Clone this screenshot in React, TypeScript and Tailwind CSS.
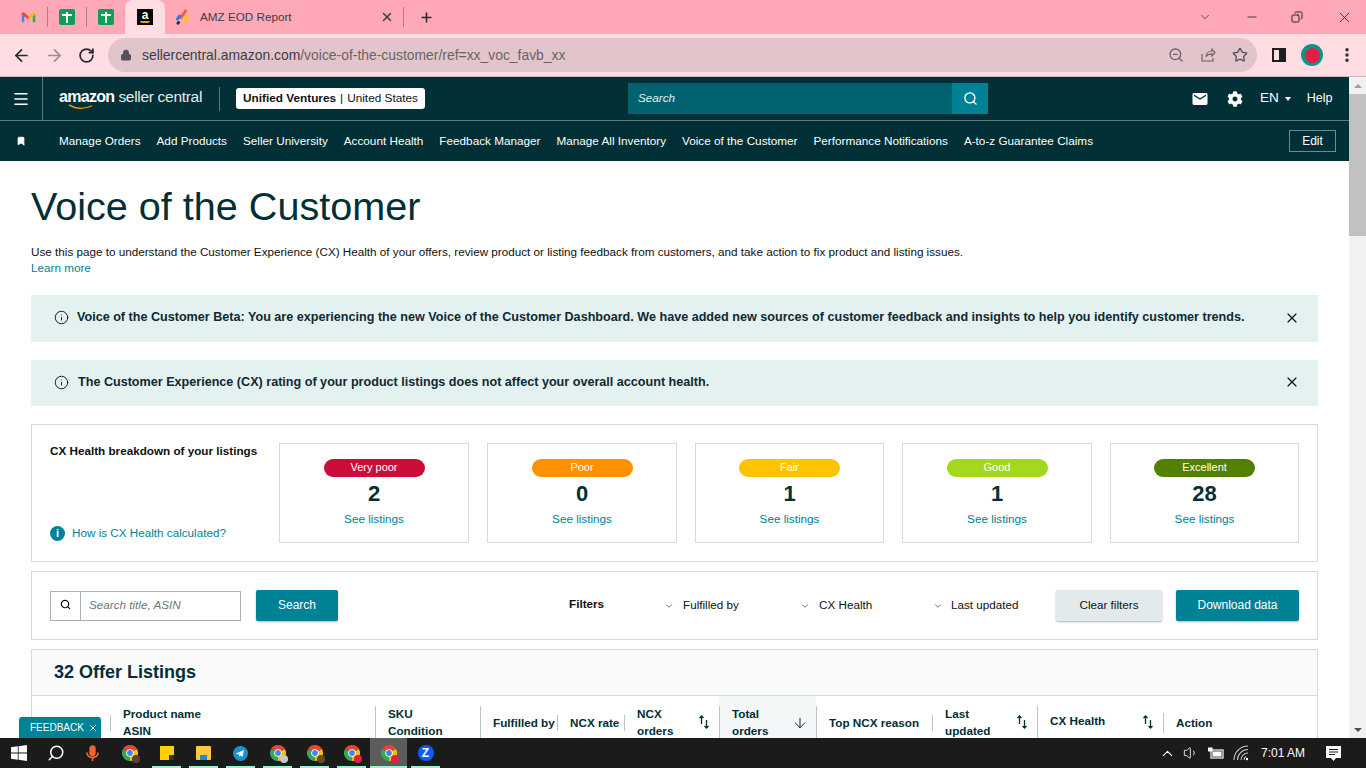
import { ArrowDown, ArrowLeft, ArrowRight, ChevronDown, ChevronUp, Info, Lock, Menu, Minus, MoreVertical, Plus, RotateCw, Search, Star, Volume1, X, ZoomOut, Bookmark, Copy } from "lucide-react";
import { FaCog } from "react-icons/fa";
import { MdEmail } from "react-icons/md";

const navItems = [
	"Manage Orders",
	"Add Products",
	"Seller University",
	"Account Health",
	"Feedback Manager",
	"Manage All Inventory",
	"Voice of the Customer",
	"Performance Notifications",
	"A-to-z Guarantee Claims",
];

const healthCards = [
	{ label: "Very poor", count: "2", color: "bg-[#cc0c39]", width: "w-[190px]" },
	{ label: "Poor", count: "0", color: "bg-[#ff9000]", width: "w-[190px]" },
	{ label: "Fair", count: "1", color: "bg-[#ffc400]", width: "w-[189px]" },
	{ label: "Good", count: "1", color: "bg-[#a4d81c]", width: "w-[190px]" },
	{ label: "Excellent", count: "28", color: "bg-[#538000]", width: "w-[189px]" },
];

function SheetsIcon() {
	return (
		<span className="relative flex h-4 w-4 items-center justify-center rounded-[2px] bg-[#0f9d58]">
			<span className="absolute h-[11px] w-[2px] bg-white" />
			<span className="absolute top-[5px] h-[2px] w-[10px] bg-white" />
		</span>
	);
}

function GmailIcon() {
	return (
		<svg viewBox="0 0 16 13" className="h-[11px] w-[15px]">
			<path d="M0 2v10h3V5z" fill="#4285f4" />
			<path d="M13 5v7h3V2z" fill="#34a853" />
			<path d="M0 2l3 3 5 4V5L3 1C1.500 0 0 .8 0 2z" fill="#ea4335" />
			<path d="M8 5l5-4c1.500-1 3-.2 3 1l-3 3-5 4z" fill="#fbbc04" />
		</svg>
	);
}

function ChromeIcon({ badge }: { badge?: string }) {
	return (
		<span className="relative block h-4 w-4">
			<svg viewBox="0 0 16 16" className="h-4 w-4">
				<path d="M8 8L1.070 4A8 8 0 0 1 14.930 4Z" fill="#ea4335" />
				<path d="M8 8L14.930 4A8 8 0 0 1 8 16Z" fill="#fbbc04" />
				<path d="M8 8L8 16A8 8 0 0 1 1.070 4Z" fill="#34a853" />
				<circle cx="8" cy="8" r="3.800" fill="white" />
				<circle cx="8" cy="8" r="2.900" fill="#4285f4" />
			</svg>
			{badge && <span className={`absolute -right-[2px] -bottom-[2px] h-2 w-2 rounded-full ${badge}`} />}
		</span>
	);
}

function SortIcon() {
	return (
		<svg viewBox="0 0 12 14" className="h-[14px] w-[12px] text-[#002f36]" fill="none" stroke="currentColor" strokeWidth="1.300">
			<path d="M3.500 9V1M1.500 3l2-2 2 2" />
			<path d="M8.500 5v8M6.500 11l2 2 2-2" />
		</svg>
	);
}

function TallDivider() {
	return <span className="absolute top-[10px] left-0 h-[50px] w-px bg-[#b8c6c9]" />;
}

function ShortDivider() {
	return <span className="absolute top-[19px] left-0 h-[16px] w-px bg-[#b8c6c9]" />;
}

function HeaderCell({ lines, sort, className, sortClass }: { lines: string[]; sort?: boolean; className?: string; sortClass?: string }) {
	return (
		<div className={`flex items-start justify-between pr-[9px] pl-[13px] ${className ?? "pt-[9px]"}`}>
			<div className="text-[11.700px] leading-[17px] font-semibold whitespace-nowrap text-[#002f36]">
				{lines.map((line) => (
					<div key={line}>{line}</div>
				))}
			</div>
			{sort && (
				<span className={sortClass ?? "mt-[10px]"}>
					<SortIcon />
				</span>
			)}
		</div>
	);
}

function TaskbarApp({ active, children }: { active?: boolean; children: React.ReactNode }) {
	return (
		<span className={`relative flex h-full w-[37px] items-center justify-center ${active ? "bg-[#5c5c5c]" : ""}`}>
			{children}
			<span className={`absolute bottom-0 h-[2px] bg-[#a0f0d0] ${active ? "inset-x-0" : "inset-x-[4px]"}`} />
		</span>
	);
}

export default function App() {
	return (
		<div className="relative flex h-screen w-screen flex-col overflow-hidden bg-white font-['Liberation_Sans',Arial,sans-serif]">
			{/* browser tabs */}
			<div className="flex h-[34px] shrink-0 items-center bg-[#ffa9b8]">
				<div className="flex h-full w-[47px] items-center justify-center pl-[10px]">
					<GmailIcon />
				</div>
				<span className="h-5 w-px bg-[#a8808a]" />
				<div className="flex h-full w-[38px] items-center justify-center">
					<SheetsIcon />
				</div>
				<span className="h-5 w-px bg-[#a8808a]" />
				<div className="flex h-full w-[38px] items-center justify-center">
					<SheetsIcon />
				</div>
				<div className="flex h-full w-[40px] items-center justify-center rounded-t-lg bg-[#ffdde3]">
					<span className="relative flex h-4 w-4 justify-center bg-black text-[12px] leading-[13px] font-bold text-white">
						a
						<span className="absolute bottom-[2px] left-[3px] h-[2px] w-[10px] rounded-b-full bg-[#ff9900]" />
					</span>
				</div>
				<div className="flex h-full w-[238px] items-center pl-[10px]">
					<svg viewBox="0 0 16 16" className="h-4 w-4 shrink-0" fill="none" strokeLinecap="round" strokeWidth="3">
						<path d="M6 8.500L10.500 2" stroke="#f25c3a" />
						<path d="M8.500 13.500L13.500 7" stroke="#ffc02e" />
						<path d="M2.500 10L4.500 7" stroke="#2b78e4" />
						<path d="M3 14.200L3.500 13.500" stroke="#1f2a55" />
					</svg>
					<span className="ml-[9px] text-[11.700px] text-[#3c3c44]">AMZ EOD Report</span>
					<X className="mr-[9px] ml-auto h-[14px] w-[14px] text-[#3c3c44]" strokeWidth={2.500} />
				</div>
				<span className="h-5 w-px bg-[#a8808a]" />
				<Plus className="ml-[15px] h-[15px] w-[15px] text-[#2a2a30]" strokeWidth={2.500} />
				<div className="ml-auto flex items-center pr-[13px] text-[#2a2a30]">
					<ChevronDown className="mr-[33px] h-[14px] w-[14px]" strokeWidth={1.200} />
					<Minus className="mr-[32px] h-[14px] w-[14px]" strokeWidth={1.500} />
					<Copy className="mr-[33px] h-3 w-3 -scale-x-100" strokeWidth={2} />
					<X className="h-[17px] w-[17px]" strokeWidth={1.200} />
				</div>
			</div>

			{/* browser toolbar */}
			<div className="flex h-[43px] shrink-0 items-center border-b border-[#c8b8bc] bg-[#ffdde3]">
				<ArrowLeft className="ml-[12px] h-[19px] w-[19px] text-[#2a2a30]" strokeWidth={2.200} />
				<ArrowRight className="ml-[14px] h-[19px] w-[19px] text-[#9a8c90]" strokeWidth={2.200} />
				<RotateCw className="ml-[14px] h-[17px] w-[17px] text-[#2a2a30]" strokeWidth={2.500} />
				<div className="mr-[15px] ml-[13px] flex h-[34px] flex-1 items-center rounded-full bg-[#e2c5ca] pr-[9px] pl-[12px]">
					<Lock className="h-[12px] w-[12px] text-[#55505a]" fill="currentColor" />
					<span className="ml-[10px] text-[13.900px] text-[#3c3c44]">
						sellercentral.amazon.com
						<span className="text-[#6a6268]">/voice-of-the-customer/ref=xx_voc_favb_xx</span>
					</span>
					<ZoomOut className="ml-auto h-4 w-4 text-[#6a6268]" />
					<svg viewBox="0 0 16 16" className="ml-[16px] h-4 w-4 text-[#6a6268]" fill="none" stroke="currentColor" strokeWidth="1.200">
						<path d="M2 7v7h11v-3" />
						<path d="M6 10c0-3.500 2.500-6 6-6V2l3 3.500L12 9V6.800c-2.500 0-5 1-6 3.200z" />
					</svg>
					<Star className="ml-[16px] h-4 w-4 text-[#55505a]" />
				</div>
				<span className="flex h-[14px] w-[14px] justify-end border-2 border-[#1d1d22]">
					<span className="h-full w-[5px] bg-[#1d1d22]" />
				</span>
				<span className="ml-[15px] flex h-[22px] w-[22px] items-center justify-center rounded-full bg-[#0d9488]">
					<span className="h-[15px] w-[15px] rounded-full bg-[#e11d48]" />
				</span>
				<MoreVertical className="mr-[10px] ml-[15px] h-[18px] w-[18px] text-[#2a2a30]" strokeWidth={2.500} />
			</div>

			<div className="flex min-h-0 flex-1">
				<div className="min-w-0 flex-1 overflow-hidden">
					{/* seller central header */}
					<div className="flex h-[44px] items-center border-b border-[#5f7a7f] bg-[#002f36] text-white">
						<div className="flex h-full w-[43px] items-center justify-center border-r border-[#5f7a7f]">
							<Menu className="h-[18px] w-[18px]" strokeWidth={2.200} />
						</div>
						<div className="relative ml-[16px] flex w-[144px] items-baseline pb-[3px] whitespace-nowrap">
							<span className="text-[16px] leading-none font-bold tracking-[-0.7px]">amazon</span>
							<span className="ml-[4px] text-[15.500px] leading-none tracking-[-0.3px] text-[#e6ecec]">seller central</span>
							<svg viewBox="0 0 30 7" className="absolute top-[15px] left-[8px] h-[6px] w-[28px]" fill="none" stroke="#ff9900" strokeWidth="1.500">
								<path d="M1 1c8 5 18 5 27 1" />
							</svg>
						</div>
						<span className="ml-[16px] h-[24px] w-px bg-[#5f7a7f]" />
						<div className="ml-[16px] flex h-[21px] w-[189px] items-center justify-center rounded-[3px] bg-white text-[11.800px] text-[#0f1111]">
							<span className="font-bold">Unified Ventures</span>
							<span className="mx-1">|</span>
							United States
						</div>
						<div className="ml-[203px] flex h-[31px] w-[360px] items-center bg-[#00626f]">
							<span className="flex-1 pb-px pl-[10px] text-[11.700px] text-[#e6f0f1] italic">Search</span>
							<span className="flex h-full w-[36px] items-center justify-center bg-[#008296]">
								<Search className="h-[15px] w-[15px]" strokeWidth={2.200} />
							</span>
						</div>
						<MdEmail className="ml-[203px] h-[18px] w-[18px]" />
						<FaCog className="ml-[18px] h-[16px] w-[16px]" />
						<span className="ml-[17px] text-[13.500px]">EN</span>
						<span className="mt-px ml-[6px] h-0 w-0 border-x-[3.500px] border-t-[4px] border-x-transparent border-t-white" />
						<span className="ml-[16px] text-[12.500px]">Help</span>
					</div>

					{/* favourites bar */}
					<div className="flex h-[40px] items-center bg-[#002f36] text-[11.740px] text-white">
						<Bookmark className="ml-[16px] h-[10px] w-[10px]" fill="white" />
						<div className="ml-[33px] flex gap-4 whitespace-nowrap">
							{navItems.map((item) => (
								<span key={item}>{item}</span>
							))}
						</div>
						<span className="mr-[13px] ml-auto flex h-[22px] w-[47px] items-center justify-center border border-[#6f8a8f] text-xs">Edit</span>
					</div>

					{/* page */}
					<div className="px-[31px] text-[#002f36]">
						<h1 className="pt-[22px] text-[39.600px] leading-[46px] font-light">Voice of the Customer</h1>
						<p className="mt-[14px] text-[11.700px] leading-[17px] text-[#0f1111]">
							Use this page to understand the Customer Experience (CX) Health of your offers, review product or listing feedback from customers, and take action to fix product and listing issues.
						</p>
						<a className="block text-[11.700px] leading-[16px] text-[#008296]">Learn more</a>

						<div className="mt-[19px] flex h-[47px] items-center bg-[#e3f1f1] pr-[18px] pb-[2px] pl-[23px]">
							<Info className="h-[15px] w-[15px] text-[#0f1111]" strokeWidth={1.500} />
							<span className="ml-[8px] text-[12.600px] font-semibold whitespace-nowrap text-[#0f2a30]">
								Voice of the Customer Beta: You are experiencing the new Voice of the Customer Dashboard. We have added new sources of customer feedback and insights to help you identify customer trends.
							</span>
							<X className="ml-auto h-4 w-4 text-[#0f1111]" strokeWidth={1.800} />
						</div>
						<div className="mt-[18px] flex h-[46px] items-center bg-[#e3f1f1] pr-[18px] pb-[2px] pl-[23px]">
							<Info className="h-[15px] w-[15px] text-[#0f1111]" strokeWidth={1.500} />
							<span className="ml-[9px] text-[12.600px] font-semibold whitespace-nowrap text-[#0f2a30]">
								The Customer Experience (CX) rating of your product listings does not affect your overall account health.
							</span>
							<X className="ml-auto h-4 w-4 text-[#0f1111]" strokeWidth={1.800} />
						</div>

						{/* CX health */}
						<div className="mt-[18px] flex h-[138px] border border-[#d5dbdb] py-[18px] pr-[18px] pl-[18px]">
							<div className="flex w-[229px] shrink-0 flex-col justify-between">
								<span className="pt-[1px] text-[11.700px] leading-[14px] font-semibold text-[#0f1111]">CX Health breakdown of your listings</span>
								<span className="flex items-center pb-px text-[11.700px] text-[#008296]">
									<span className="mr-[7px] flex h-[15px] w-[15px] items-center justify-center rounded-full bg-[#008296] text-[11px] font-bold text-white">i</span>
									How is CX Health calculated?
								</span>
							</div>
							<div className="flex gap-[18px]">
								{healthCards.map((card) => (
									<div key={card.label} className={`flex h-[100px] shrink-0 flex-col items-center border border-[#d5dbdb] pt-[15px] ${card.width}`}>
										<span className={`flex h-[18px] w-[101px] items-center justify-center rounded-full pb-px text-[11px] text-white ${card.color}`}>
											{card.label}
										</span>
										<span className="mt-[2px] text-[22px] leading-[30px] font-semibold text-[#002f36]">{card.count}</span>
										<span className="mt-[2px] text-[11.700px] leading-[16px] text-[#008296]">See listings</span>
									</div>
								))}
							</div>
						</div>

						{/* filters */}
						<div className="mt-[9px] flex h-[69px] items-center border border-[#d5dbdb] pr-[18px] pl-[18px] whitespace-nowrap">
							<div className="flex h-[30px] w-[191px] shrink-0 border border-[#a6b4b7]">
								<span className="flex w-[30px] items-center justify-center border-r border-[#a6b4b7] pb-[3px]">
									<Search className="h-[11px] w-[11px] text-[#0f1111]" strokeWidth={2.500} />
								</span>
								<span className="flex items-center pb-px pl-2 text-[11.700px] text-[#6b7777] italic">Search title, ASIN</span>
							</div>
							<button className="ml-[15px] h-[31px] w-[82px] shrink-0 rounded-[2px] bg-[#008296] pb-[2px] text-xs text-white shadow-[0_1px_2px_rgba(0,0,0,0.3)]">Search</button>
							<span className="mb-[4px] ml-[231px] w-[95px] shrink-0 text-[11.700px] font-semibold text-[#0f1111]">Filters</span>
							<ChevronDown className="h-[10px] w-[10px] shrink-0 text-[#4a5a5f]" strokeWidth={2} />
							<span className="mb-px ml-[9px] w-[117px] shrink-0 text-[11.700px] text-[#0f1111]">Fulfilled by</span>
							<ChevronDown className="h-[10px] w-[10px] shrink-0 text-[#4a5a5f]" strokeWidth={2} />
							<span className="mb-px ml-[9px] w-[114px] shrink-0 text-[11.700px] text-[#0f1111]">CX Health</span>
							<ChevronDown className="h-[10px] w-[10px] shrink-0 text-[#4a5a5f]" strokeWidth={2} />
							<span className="mb-px ml-[8px] text-[11.700px] text-[#0f1111]">Last updated</span>
							<button className="ml-auto h-[31px] w-[106px] shrink-0 rounded-[2px] bg-[#e3eaeb] pb-[2px] text-[11.700px] text-[#0f1111] shadow-[0_1px_2px_rgba(0,0,0,0.3)]">Clear filters</button>
							<button className="ml-[14px] h-[31px] w-[123px] shrink-0 rounded-[2px] bg-[#008296] pb-[2px] text-xs text-white shadow-[0_1px_2px_rgba(0,0,0,0.3)]">Download data</button>
						</div>

						{/* listings table */}
						<div className="mt-[9px] border border-[#d5dbdb]">
							<div className="flex h-[46px] items-center border-b border-[#d5dbdb] bg-[#fafafa] pl-[22px] text-[18px] font-semibold text-[#002f36]">32 Offer Listings</div>
							<div className="grid h-[60px] grid-cols-[78px_265px_105px_77px_67px_95px_97px_116px_105px_126px_1fr]">
								<div />
								<div className="relative"><ShortDivider /><HeaderCell lines={["Product name", "ASIN"]} /></div>
								<div className="relative"><TallDivider /><HeaderCell lines={["SKU", "Condition"]} /></div>
								<div className="relative"><TallDivider /><HeaderCell lines={["Fulfilled by"]} className="pt-[18px]" /></div>
								<div className="relative"><ShortDivider /><HeaderCell lines={["NCX rate"]} className="pt-[18px]" /></div>
								<div className="relative"><ShortDivider /><HeaderCell lines={["NCX", "orders"]} sort /></div>
								<div className="relative bg-[#f3f7f8]">
									<TallDivider />
									<div className="flex items-start justify-between pt-[9px] pr-[8px] pl-[13px]">
										<div className="text-[11.700px] leading-[17px] font-semibold text-[#002f36]">
											<div>Total</div>
											<div>orders</div>
										</div>
										<ArrowDown className="mt-[10px] h-4 w-4 text-[#002f36]" strokeWidth={1.500} />
									</div>
								</div>
								<div className="relative"><TallDivider /><HeaderCell lines={["Top NCX reason"]} className="pt-[18px]" /></div>
								<div className="relative"><ShortDivider /><HeaderCell lines={["Last", "updated"]} sort /></div>
								<div className="relative"><TallDivider /><HeaderCell lines={["CX Health"]} sort className="pt-[16px]" sortClass="mt-[3px]" /></div>
								<div className="relative">
									<span className="absolute top-[17px] left-0 h-[20px] w-px bg-[#b8c6c9]" />
									<HeaderCell lines={["Action"]} className="pt-[18px]" />
								</div>
							</div>
						</div>
					</div>
				</div>

				{/* page scrollbar */}
				<div className="flex w-[17px] shrink-0 flex-col bg-[#f1f1f1]">
					<span className="flex h-[17px] items-center justify-center">
						<span className="h-0 w-0 border-x-[4px] border-b-[4px] border-x-transparent border-b-[#a0a0a0]" />
					</span>
					<div className="h-[142px] bg-[#c1c1c1]" />
					<span className="mt-auto flex h-[17px] items-center justify-center">
						<span className="h-0 w-0 border-x-[4px] border-t-[4px] border-x-transparent border-t-[#505050]" />
					</span>
				</div>
			</div>

			{/* windows taskbar */}
			<div className="flex h-[30px] shrink-0 items-center bg-[#1b1b1b] text-white">
				<span className="flex h-full w-[37px] items-center justify-center">
					<svg viewBox="0 0 16 16" className="h-[16px] w-[16px]" fill="white">
						<path d="M0 2.300l6.800-1v6.300H0zM7.600 1.200L16 0v7.600H7.600zM0 8.400h6.800v6.300l-6.800-1zM7.600 8.400H16V16l-8.400-1.200z" />
					</svg>
				</span>
				<span className="flex h-full w-[37px] items-center justify-center">
					<Search className="h-[18px] w-[18px] -scale-x-100" strokeWidth={2} />
				</span>
				<span className="flex h-full w-[37px] items-center justify-center">
					<svg viewBox="0 0 14 18" className="h-[17px] w-[13px]" fill="none" stroke="#f0682e" strokeWidth="1.800">
						<rect x="4.500" y="1" width="5" height="10" rx="2.500" fill="#f0682e" />
						<path d="M1 8c0 7 12 7 12 0M7 13v4" />
					</svg>
				</span>
				<span className="flex h-full w-[37px] items-center justify-center"><ChromeIcon badge="bg-[#5c4033]" /></span>
				<TaskbarApp>
					<span className="relative h-[14px] w-[14px] bg-[#ffd000]">
						<span className="absolute right-0 bottom-0 h-[5px] w-[5px] bg-[#333]" />
					</span>
				</TaskbarApp>
				<TaskbarApp>
					<span className="relative h-[14px] w-[15px] rounded-[1px] bg-[#ffc83d]">
						<span className="absolute bottom-0 left-[4px] h-[5px] w-[7px] bg-[#1e88d2]" />
					</span>
				</TaskbarApp>
				<TaskbarApp>
					<span className="flex h-[15px] w-[15px] items-center justify-center rounded-full bg-[#1f8fd0]">
						<svg viewBox="0 0 10 10" className="h-[9px] w-[9px]" fill="white">
							<path d="M0 5l9-4-2 8-2-2-1 2-1-3 4-3-5 3z" />
						</svg>
					</span>
				</TaskbarApp>
				<TaskbarApp><ChromeIcon badge="bg-[#c8c8c8]" /></TaskbarApp>
				<TaskbarApp><ChromeIcon badge="bg-[#6b4a22]" /></TaskbarApp>
				<TaskbarApp><ChromeIcon badge="bg-[#e11d48]" /></TaskbarApp>
				<TaskbarApp active><ChromeIcon badge="bg-[#e11d48]" /></TaskbarApp>
				<TaskbarApp>
					<span className="flex h-4 w-4 items-center justify-center rounded-full bg-[#0b5cff] text-[12px] font-bold">Z</span>
				</TaskbarApp>

				<ChevronUp className="ml-auto h-[17px] w-[17px]" strokeWidth={1.500} />
				<Volume1 className="ml-[7px] h-[16px] w-[16px]" strokeWidth={1.300} />
				<svg viewBox="0 0 16 12" className="ml-[9px] h-[12px] w-[16px]" fill="none" stroke="white" strokeWidth="1.200">
					<rect x="3" y="3" width="12" height="8" />
					<rect x="5" y="5" width="8" height="4" fill="white" />
					<path d="M0 1h4v3H0z" fill="white" />
				</svg>
				<svg viewBox="0 0 16 16" className="ml-[9px] h-[16px] w-[16px] text-[#c8c8c8]" fill="none" stroke="currentColor" strokeWidth="1.100">
					<path d="M1 15A14 14 0 0 1 15 1" />
					<path d="M4.500 15A10.500 10.500 0 0 1 15 4.500" />
					<path d="M8 15A7 7 0 0 1 15 8" />
					<path d="M11 15A4 4 0 0 1 13 11.500" />
					<circle cx="14" cy="14" r="1.200" fill="white" stroke="none" />
				</svg>
				<span className="ml-[12px] text-xs">7:01 AM</span>
				<svg viewBox="0 0 17 17" className="mr-[24px] ml-[20px] h-[17px] w-[17px]">
					<path d="M1 1h15v12h-5l-2.500 3L6 13H1z" fill="white" />
					<path d="M4 4.500h9M4 7h9M4 9.500h6" stroke="#1b1b1b" strokeWidth="1" />
				</svg>
			</div>

			{/* feedback tab */}
			<div className="absolute top-[717px] left-[19px] flex h-[21px] w-[82px] items-center rounded-t-[3px] bg-[#008296] pl-[11px] text-[10px] whitespace-nowrap text-white">
				FEEDBACK
				<X className="ml-[4px] h-[10px] w-[10px]" />
			</div>
		</div>
	);
}
